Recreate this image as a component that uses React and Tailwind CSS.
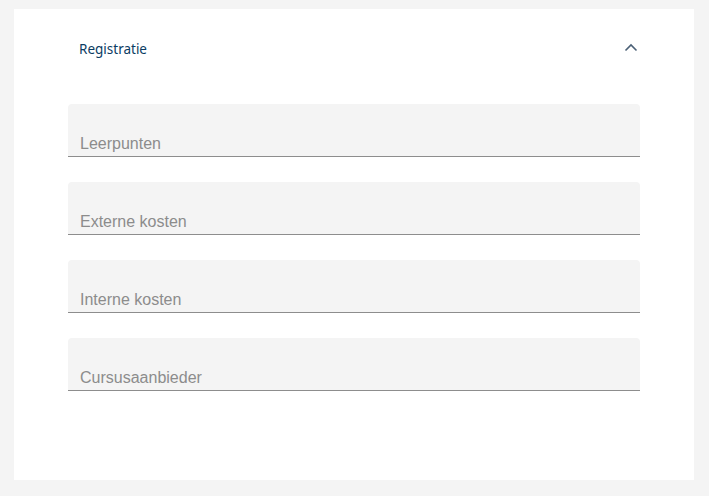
import React from 'react';

const fields = ['Leerpunten', 'Externe kosten', 'Interne kosten', 'Cursusaanbieder'];

const App = () => {
  return (
    <div className="min-h-screen bg-[#f4f4f4] pt-[9px] pl-[14px] pr-[15px] pb-[16px]">
      <div className="bg-white h-[471px] px-[54px]">
        {/* Accordion header */}
        <div className="pt-[28px] h-[50px] pl-[11px] pr-[2px] flex items-center justify-between">
          <span className="mt-[2px] text-[13.5px] text-[#0b3c63]" style={{ fontFamily: '"Noto Sans", sans-serif' }}>
            Registratie
          </span>
          <svg width="14" height="10" viewBox="0 0 14 10">
            <path d="M1.5 7.5 L7 2 L12.5 7.5" fill="none" stroke="#4b6076" strokeWidth="1.6" />
          </svg>
        </div>

        {/* Fields */}
        <div className="mt-[45px] flex flex-col gap-[25px]">
          {fields.map((label) => (
            <div
              key={label}
              className="h-[53px] bg-[#f4f4f4] rounded-t-[4px] border-b border-[#8d8d8d] flex items-end pl-[12px] pb-0"
            >
              <span className="text-[16px] text-[#8c8c8c]" style={{ fontFamily: '"Liberation Sans", Arial, sans-serif' }}>
                {label}
              </span>
            </div>
          ))}
        </div>
      </div>
    </div>
  );
};

export default App;
